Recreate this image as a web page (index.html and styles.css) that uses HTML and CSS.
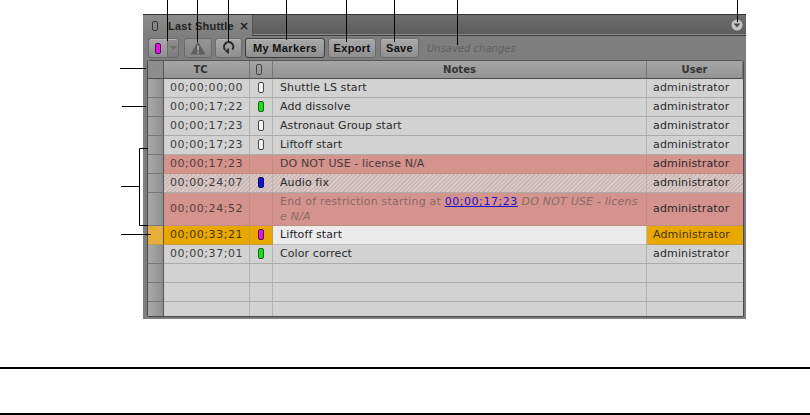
FILE: index.html
```html
<!DOCTYPE html>
<html lang="en">
<head>
<meta charset="utf-8">
<title>Last Shuttle</title>
<link rel="stylesheet" href="styles.css">
</head>
<body>
<div class="stage">
  <section class="panel">
    <header class="tabbar">
      <div class="tab">
        <span class="chip chip-tab"></span>
        <span class="tab-title">Last Shuttle</span>
        <span class="tab-close">×</span>
      </div>
      <div class="tab-rest">
        <svg class="menu-icon" width="12" height="12" viewBox="0 0 12 12"><circle cx="6" cy="6" r="5.5" fill="#c4c4c4"/><path d="M2.5 4.5h7L6 8.5z" fill="#4d4d4d"/></svg>
      </div>
    </header>
    <div class="toolbar">
      <div class="split">
        <button class="btn btn-chip"><span class="chip chip-magenta"></span></button>
        <button class="btn btn-arrow"><svg width="7" height="4" viewBox="0 0 7 4"><path d="M0 0h7L3.5 4z" fill="#6e6e6e"/></svg></button>
      </div>
      <button class="btn btn-icon btn-warn"><svg width="16" height="14" viewBox="0 0 16 14"><path d="M8 0.5L15.5 13.5H0.5z" fill="#5e5e5e"/><rect x="7" y="4.5" width="2" height="5" fill="#a0a0a0"/><rect x="7" y="10.5" width="2" height="2" fill="#a0a0a0"/></svg></button>
      <button class="btn btn-icon btn-refresh"><svg width="14" height="14" viewBox="0 0 13 13"><path d="M3 8.2A4.3 4.3 0 1 1 9.6 8" fill="none" stroke="#2a2a2a" stroke-width="1.9"/><path d="M6.4 6.6v5.4L2.6 9.2z" fill="#2a2a2a"/></svg></button>
      <button class="btn btn-text btn-outlined">My Markers</button>
      <button class="btn btn-text btn-export">Export</button>
      <button class="btn btn-text btn-save">Save</button>
      <span class="unsaved">Unsaved changes</span>
    </div>
    <div class="grid">
      <div class="row head">
        <div class="gutter"></div><div class="c tc">TC</div><div class="c col"><span class="chip chip-head"></span></div><div class="c notes">Notes</div><div class="c user">User</div>
      </div>
      <div class="row">
        <div class="gutter"></div><div class="c tc">00;00;00;00</div><div class="c col"><span class="chip chip-white"></span></div><div class="c notes">Shuttle LS start</div><div class="c user">administrator</div>
      </div>
      <div class="row">
        <div class="gutter"></div><div class="c tc">00;00;17;22</div><div class="c col"><span class="chip chip-green"></span></div><div class="c notes">Add dissolve</div><div class="c user">administrator</div>
      </div>
      <div class="row">
        <div class="gutter"></div><div class="c tc">00;00;17;23</div><div class="c col"><span class="chip chip-white"></span></div><div class="c notes">Astronaut Group start</div><div class="c user">administrator</div>
      </div>
      <div class="row">
        <div class="gutter"></div><div class="c tc">00;00;17;23</div><div class="c col"><span class="chip chip-white"></span></div><div class="c notes">Liftoff start</div><div class="c user">administrator</div>
      </div>
      <div class="row restricted">
        <div class="gutter"></div><div class="c tc">00;00;17;23</div><div class="c col"></div><div class="c notes">DO NOT USE - license N/A</div><div class="c user">administrator</div>
      </div>
      <div class="row hatched">
        <div class="gutter"></div><div class="c tc">00;00;24;07</div><div class="c col"><span class="chip chip-blue"></span></div><div class="c notes">Audio fix</div><div class="c user">administrator</div>
      </div>
      <div class="row restricted tall">
        <div class="gutter"></div><div class="c tc">00;00;24;52</div><div class="c col"></div><div class="c notes dim">End of restriction starting at <a href="#">00;00;17;23</a> <em>DO NOT USE - licens<br>e N/A</em></div><div class="c user">administrator</div>
      </div>
      <div class="row current">
        <div class="gutter"></div><div class="c tc">00;00;33;21</div><div class="c col"><span class="chip chip-magenta"></span></div><div class="c notes">Liftoff start</div><div class="c user">Administrator</div>
      </div>
      <div class="row">
        <div class="gutter"></div><div class="c tc">00;00;37;01</div><div class="c col"><span class="chip chip-green"></span></div><div class="c notes">Color correct</div><div class="c user">administrator</div>
      </div>
      <div class="row"><div class="gutter"></div><div class="c tc"></div><div class="c col"></div><div class="c notes"></div><div class="c user"></div></div>
      <div class="row"><div class="gutter"></div><div class="c tc"></div><div class="c col"></div><div class="c notes"></div><div class="c user"></div></div>
      <div class="row last"><div class="gutter"></div><div class="c tc"></div><div class="c col"></div><div class="c notes"></div><div class="c user"></div></div>
    </div>
  </section>
  <svg class="callouts" width="810" height="415" viewBox="0 0 810 415">
    <g fill="none" stroke="#000" stroke-width="1">
      <path d="M167.5 0V41M197.5 0V42M228.5 0V42M286.5 0V40M346.5 0V42M394.5 0V42M457.5 0V45M737.5 0V22"/>
      <path d="M120 68.5H146M122 106.5H146M139.5 148.5H148M139.5 148.5V225.5H148M121 186.5H139M121 234.5H151"/>
    </g>
  </svg>
  <div class="rules">
    <div class="rule"></div>
    <div class="rule"></div>
  </div>
</div>
</body>
</html>
```
FILE: styles.css
```css
* { box-sizing: border-box; }
html, body { margin: 0; padding: 0; background: #fff; }
body { font-family: "DejaVu Sans", Verdana, sans-serif; font-size: 11px; color: #222; overflow: hidden; }
.stage { position: relative; width: 810px; height: 415px; overflow: hidden; padding: 14px 0 0 143px; }
.panel { width: 603px; height: 305px; background: #7e7e7e; border-top: 1px solid #333; display: flex; flex-direction: column; }
.tabbar { height: 21px; display: flex; background: #6a6a6a; flex: none; }
.tab { width: 109px; display: flex; align-items: center; padding-left: 9px; background: linear-gradient(#8c8c8c, #7e7e7e); }
.tab-title { font-family: "Liberation Sans", Arial, sans-serif; font-weight: 700; color: #222; font-size: 11px; letter-spacing: .25px; white-space: nowrap; margin-left: 10px; }
.tab-close { font-weight: 700; font-size: 12px; color: #222; margin-left: 5px; }
.tab-rest { flex: 1; display: flex; justify-content: flex-end; align-items: center; padding-right: 3px; background: linear-gradient(#6d6d6d, #5c5c5c); border-bottom: 1px solid #3f3f3f; box-shadow: inset 0 -1px 0 #8a8a8a; border-left: 1px solid #555; }
.menu-icon { display: block; }
.toolbar { height: 24px; flex: none; display: flex; align-items: center; padding: 0 0 0 5px; background: #7e7e7e; }
.btn { height: 20px; font: inherit; padding: 0; display: flex; align-items: center; justify-content: center; border: 1px solid #6a6a6a; border-radius: 3px; background: linear-gradient(#a9a9a9, #8f8f8f); color: #111; box-shadow: inset 0 1px 0 #b6b6b6; }
.split { display: flex; margin-right: 5px; }
.btn-chip { width: 19px; border-radius: 3px 0 0 3px; border-right: 0; }
.btn-arrow { width: 12px; border-radius: 0 3px 3px 0; background: linear-gradient(#8f8f8f, #7d7d7d); }
.btn-icon { width: 28px; margin-right: 3px; }
.btn-warn { background: linear-gradient(#959595, #868686); box-shadow: none; }
.btn-refresh { width: 27px; }
.btn-text { font-family: "Liberation Sans", Arial, sans-serif; font-weight: 700; font-size: 11px; letter-spacing: .35px; }
.btn-outlined { width: 80px; border: 1px solid #3a3a3a; margin-right: 3px; }
.btn-export { width: 48px; margin-right: 4px; }
.btn-save { width: 39px; margin-right: 8px; }
.unsaved { font-style: italic; font-size: 10px; color: #606060; white-space: nowrap; }
.grid { flex: none; width: 597px; height: 257px; margin-left: 4px; border: 1px solid #4a4a4a; border-top-color: #555; border-radius: 3px 3px 2px 2px; overflow: hidden; background: #d2d2d2; display: flex; flex-direction: column; }
.row { display: grid; grid-template-columns: 16px 86px 23px 374px 1fr; height: 19px; flex: none; }
.gutter { background: linear-gradient(90deg, #a6a6a6 0, #a6a6a6 2px, #8f8f8f 100%); border-bottom: 1px solid #777; border-right: 1px solid #555; }
.c { display: flex; align-items: center; border-right: 1px solid #b4b4b4; border-bottom: 1px solid #ababab; padding-bottom: 1px; min-width: 0; white-space: nowrap; color: #2a2a2a; }
.c.user { border-right: 0; padding-left: 6px; letter-spacing: .15px; }
.c.tc { justify-content: center; letter-spacing: .55px; color: #3c3c3c; }
.c.col { justify-content: center; }
.c.notes { padding-left: 7px; letter-spacing: .1px; }
.head { height: 18px; }
.head .c { font-weight: 700; font-size: 10px; justify-content: center; background: linear-gradient(#a6a6a6, #939393); border-bottom: 1px solid #4d4d4d; border-right: 1px solid #777; color: #333; padding-left: 0; letter-spacing: 0; }
.head .c.tc { padding-right: 12px; letter-spacing: 0; color: #333; }
.head .c.col { padding-right: 4px; }
.head .gutter { background: #8d8d8d; border-bottom: 1px solid #4d4d4d; }
.restricted .c { background: #d5938d; border-color: #c48a84; }
.restricted .c.tc { color: #553c38; }
.restricted .c.notes { color: #4a3a38; }
.restricted .c.notes.dim { color: #8a6a66; letter-spacing: .2px; }
.hatched .c { background: repeating-linear-gradient(135deg, #dacac7 0 1.5px, #cbb7b4 1.5px 3px); }
.tall { height: 33px; }
.tall .c.notes { display: block; line-height: 15px; padding-top: 1px; white-space: nowrap; }
.tall a { color: #1f10c8; letter-spacing: .55px; }
.tall em { font-style: italic; }
.current .c { background: #e8a800; border-color: #bda040; }
.current .c.tc { color: #4a3500; }
.current .c.user { color: #4a3500; }
.current .gutter { background: #e7ae3a; border-bottom: 1px solid #bda040; }
.current .c.notes { background: #ebebeb; color: #222; border-color: #bdbdbd; }
.last { flex: 1; }
.last .c, .last .gutter { border-bottom: 0; }
.chip { display: block; width: 6px; height: 11px; border-radius: 2px; border: 1px solid #2a2a2a; }
.chip-white { background: #f6f6f6; border-color: #444; }
.chip-green { background: #19e219; border-color: #1f5e1f; }
.chip-blue { background: #1212e0; border-color: #101050; }
.chip-magenta { background: #e414e4; border-color: #501050; }
.chip-head { background: transparent; border-color: #444; }
.chip-tab { background: transparent; border-color: #333; height: 10px; }
.callouts { position: absolute; left: 0; top: 0; pointer-events: none; }
.rules { position: absolute; left: 0; right: 0; top: 367px; display: flex; flex-direction: column; gap: 44px; }
.rule { height: 2px; background: #000; }
```
